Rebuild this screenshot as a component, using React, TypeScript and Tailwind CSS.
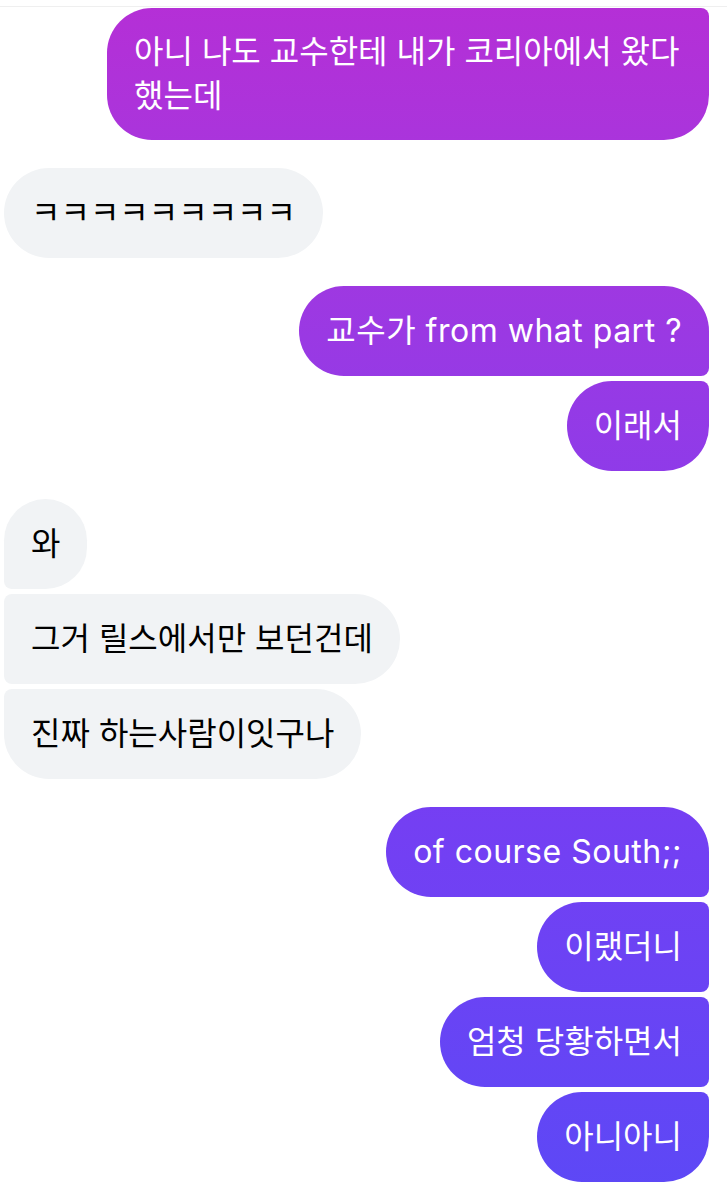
import React from 'react'

type Msg = { text: string; me: boolean; corners: string; wide?: boolean; latin?: boolean }

const messages: Msg[][] = [
  [{ text: '아니 나도 교수한테 내가 코리아에서 왔다 했는데', me: true, corners: 'rounded-[45px] rounded-tr-[8px]', wide: true }],
  [{ text: 'ㅋㅋㅋㅋㅋㅋㅋㅋㅋ', me: false, corners: 'rounded-[45px]' }],
  [
    { text: '교수가 from what part ?', me: true, corners: 'rounded-[45px] rounded-br-[8px]', latin: true },
    { text: '이래서', me: true, corners: 'rounded-[45px] rounded-tr-[8px]' },
  ],
  [
    { text: '와', me: false, corners: 'rounded-[45px] rounded-bl-[8px]' },
    { text: '그거 릴스에서만 보던건데', me: false, corners: 'rounded-[45px] rounded-tl-[8px] rounded-bl-[8px]' },
    { text: '진짜 하는사람이잇구나', me: false, corners: 'rounded-[45px] rounded-tl-[8px]' },
  ],
  [
    { text: 'of course South;;', me: true, corners: 'rounded-[45px] rounded-br-[8px]', latin: true },
    { text: '이랬더니', me: true, corners: 'rounded-[45px] rounded-tr-[8px] rounded-br-[8px]' },
    { text: '엄청 당황하면서', me: true, corners: 'rounded-[45px] rounded-tr-[8px] rounded-br-[8px]' },
    { text: '아니아니', me: true, corners: 'rounded-[45px] rounded-tr-[8px]' },
  ],
]

function Bubble({ m }: { m: Msg }) {
  const tone = m.me
    ? 'bg-fixed bg-linear-to-b from-[#b52fd6] via-[#7a3cf2] via-60% to-[#5c48f6] text-white'
    : 'bg-[#f1f3f5] text-black'
  return (
    <div
      className={`${tone} ${m.corners} ${m.wide ? 'max-w-[602px] py-[22px]' : 'py-[23px]'} ${m.latin ? 'tracking-[0.5px]' : ''} break-keep px-[27px] text-[32px] leading-[44px]`}
    >
      {m.text}
    </div>
  )
}

export default function App() {
  return (
    <main
      className="min-h-screen bg-white pt-[6px] pb-4"
      style={{ fontFamily: '"Inter", "Noto Sans CJK KR", sans-serif' }}
    >
      <div className="h-px bg-[#efefef]" />
      <div className="flex flex-col gap-[28px] pl-[4px] pr-[18px] pt-[1px]">
        {messages.map((group, i) => (
          <div key={i} className={`flex flex-col gap-[5px] ${group[0].me ? 'items-end' : 'items-start'}`}>
            {group.map((m, j) => (
              <Bubble key={j} m={m} />
            ))}
          </div>
        ))}
      </div>
    </main>
  )
}
